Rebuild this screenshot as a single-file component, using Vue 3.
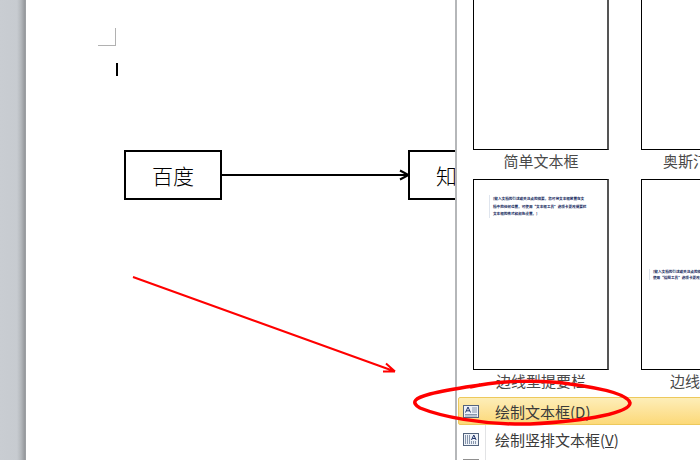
<script setup>
const leftText = '[键入文档的引述或关注点的摘要。您可将文本框放置在文档中的任何位置。可使用“文本框工具”选项卡更改提要栏文本框的格式和颜色设置。]'
const rightText = '[键入文档的引述或关注点的摘要。您可将文本框放置在文档中的任何位置。可使用“绘图工具”选项卡更改提要栏文本框的格式。]'
</script>

<template>
  <div class="screen">
    <div class="gutter"></div>
    <div class="page">
      <div class="crop"></div>
      <div class="caret"></div>
      <div class="node node-a">百度</div>
      <svg class="wire" width="700" height="460" viewBox="0 0 700 460">
        <path d="M221 175H408" fill="none" stroke="#000" stroke-width="2"/>
        <path d="M400 170.500L408.500 175L400 179.500" fill="none" stroke="#000" stroke-width="2"/>
      </svg>
      <div class="node node-b">知乎</div>
    </div>

    <div class="menu">
      <div class="gallery">
        <div class="cell">
          <div class="thumb thumb-open"></div>
          <div class="label">简单文本框</div>
        </div>
        <div class="cell">
          <div class="thumb thumb-open"></div>
          <div class="label">奥斯汀提要栏</div>
        </div>
        <div class="cell">
          <div class="thumb thumb-side">
            <p class="mini mini-left">{{ leftText }}</p>
          </div>
          <div class="label">边线型提要栏</div>
        </div>
        <div class="cell">
          <div class="thumb thumb-mid">
            <p class="mini mini-right">{{ rightText }}</p>
          </div>
          <div class="label">边线型引述</div>
        </div>
      </div>
      <div class="commands">
        <div class="cmd cmd-on">
          <span class="ico">
            <svg width="16" height="13" viewBox="0 0 16 13">
              <rect x=".5" y=".5" width="15" height="12" fill="#eef2f8" stroke="#53647e"/>
              <path d="M9 3h5M9 5h5M9 7h5M2 9.500h12M2 11h12" stroke="#8796ad"/>
              <path d="M2.500 7.500l2.500-5.500 2.500 5.500M3.500 5.800h3" fill="none" stroke="#21356b"/>
            </svg>
          </span>
          <span class="cmd-text">绘制文本框(<u>D</u>)</span>
        </div>
        <div class="cmd">
          <span class="ico">
            <svg width="16" height="13" viewBox="0 0 16 13">
              <rect x=".5" y=".5" width="15" height="12" fill="#eef2f8" stroke="#53647e"/>
              <path d="M2.500 2v9M4.500 2v9M6.500 2v9M8.500 8v3M10.500 8v3M12.500 8v3" stroke="#8796ad"/>
              <path d="M8.500 7l2.300-5 2.300 5M9.300 5.500h3" fill="none" stroke="#21356b"/>
            </svg>
          </span>
          <span class="cmd-text">绘制竖排文本框(<u>V</u>)</span>
        </div>
        <div class="cmd cmd-last">
          <span class="ico"><i class="stub"></i></span>
        </div>
      </div>
    </div>

    <svg class="ink" width="700" height="460" viewBox="0 0 700 460">
      <path d="M133 277L395 371.500M395 371.500L383 371.500M395 371.500L386 363.500" fill="none" stroke="#f00" stroke-width="2"/>
      <path d="M470 387C495 381 540 379 570 384C600 388 628 394 630 403C630 412 590 421 530 424C480 425 440 416 420 408C410 402 415 398 430 394C445 390 460 388 480 385" fill="none" stroke="#f00" stroke-width="3.500"/>
    </svg>
  </div>
</template>

<style scoped>
.screen {
  position: relative;
  width: 700px;
  height: 460px;
  overflow: hidden;
  display: flex;
  background: #fff;
  font-family: "Noto Sans CJK SC", "Liberation Sans", sans-serif;
}
.gutter {
  width: 26px;
  flex: none;
  background: linear-gradient(90deg, #c9cdd2 0, #c7cbd0 17px, #b4b8bc 21px, #94979b 25px, #a5a8ab 26px);
}
.page {
  position: relative;
  flex: 1;
  background: #fff;
}
.crop {
  position: absolute;
  left: 72px;
  top: 28px;
  width: 17px;
  height: 17px;
  border-right: 1px solid #b1b1b1;
  border-bottom: 1px solid #b1b1b1;
}
.caret {
  position: absolute;
  left: 90px;
  top: 63px;
  width: 2px;
  height: 13px;
  background: #000;
}
.wire {
  position: absolute;
  left: -26px;
  top: 0;
}
.node {
  position: absolute;
  top: 150px;
  width: 98px;
  height: 50px;
  box-sizing: border-box;
  border: 2px solid #000;
  background: #fff;
  display: flex;
  align-items: flex-start;
  justify-content: center;
  font-size: 21px;
  font-weight: 300;
  line-height: 46px;
  color: #000;
}
.node-a { left: 98px; }
.node-b { left: 382px; }
.menu {
  position: absolute;
  left: 455px;
  top: 0;
  width: 245px;
  height: 460px;
  box-sizing: border-box;
  border-left: 2px solid #b5b7b9;
  background: #fff;
  display: flex;
  flex-direction: column;
  overflow: hidden;
}
.gallery {
  display: grid;
  grid-template-columns: 136px 136px;
  column-gap: 32px;
  padding-left: 16px;
  height: 397px;
  overflow: hidden;
  flex: none;
}
.cell {
  display: flex;
  flex-direction: column;
  align-items: stretch;
}
.thumb {
  box-sizing: border-box;
  border: 1px solid #000;
  border-right: 2px solid #555;
  background: #fff;
}
.thumb-open {
  height: 150px;
  border-top: 0;
}
.thumb-side, .thumb-mid {
  height: 191px;
}
.thumb-side {
  padding: 15px 0 0 15px;
}
.thumb-mid {
  padding: 89px 0 0 7px;
}
.mini {
  margin: 0;
  font-size: 3.600px;
  line-height: 7.500px;
  font-weight: 700;
  color: #14275c;
  padding-left: 3px;
  border-left: 1px solid #dfe5ee;
}
.mini-left { width: 94px; }
.mini-right {
  width: 126px;
  line-height: 5.500px;
}
.label {
  height: 29px;
  display: flex;
  align-items: flex-start;
  justify-content: center;
  font-size: 15px;
  line-height: 22px;
  color: #4a4a4a;
  white-space: nowrap;
  overflow: hidden;
}
.cell:nth-child(2) .label {
  justify-content: flex-start;
  padding-left: 22px;
}
.cell:nth-child(4) .label {
  justify-content: flex-start;
  padding-left: 29px;
}
.commands {
  display: flex;
  flex-direction: column;
  padding-left: 1px;
  width: 260px;
}
.cmd {
  height: 28px;
  flex: none;
  display: flex;
  align-items: center;
  box-sizing: border-box;
  font-size: 15px;
  color: #3a3a3a;
}
.cmd-on {
  border: 1px solid #edc95c;
  border-radius: 2px;
  background: linear-gradient(180deg, #fdeeb8 0, #fde49c 45%, #fcd979 100%);
}
.ico {
  width: 28px;
  height: 100%;
  flex: none;
  display: flex;
  align-items: center;
  padding-left: 5px;
  box-sizing: border-box;
  border-right: 1px solid #e2e3e5;
  margin-right: 9px;
}
.cmd-on .ico { border-right-color: transparent; margin-left: -1px; }
.cmd-text { white-space: nowrap; }
.cmd-last { height: 10px; }
.stub {
  display: block;
  width: 16px;
  height: 13px;
  margin-top: 14px;
  border: 1px solid #8f8f8f;
  background: #f4f4f4;
  box-sizing: border-box;
}
.ink {
  position: absolute;
  left: 0;
  top: 0;
  pointer-events: none;
}
</style>
